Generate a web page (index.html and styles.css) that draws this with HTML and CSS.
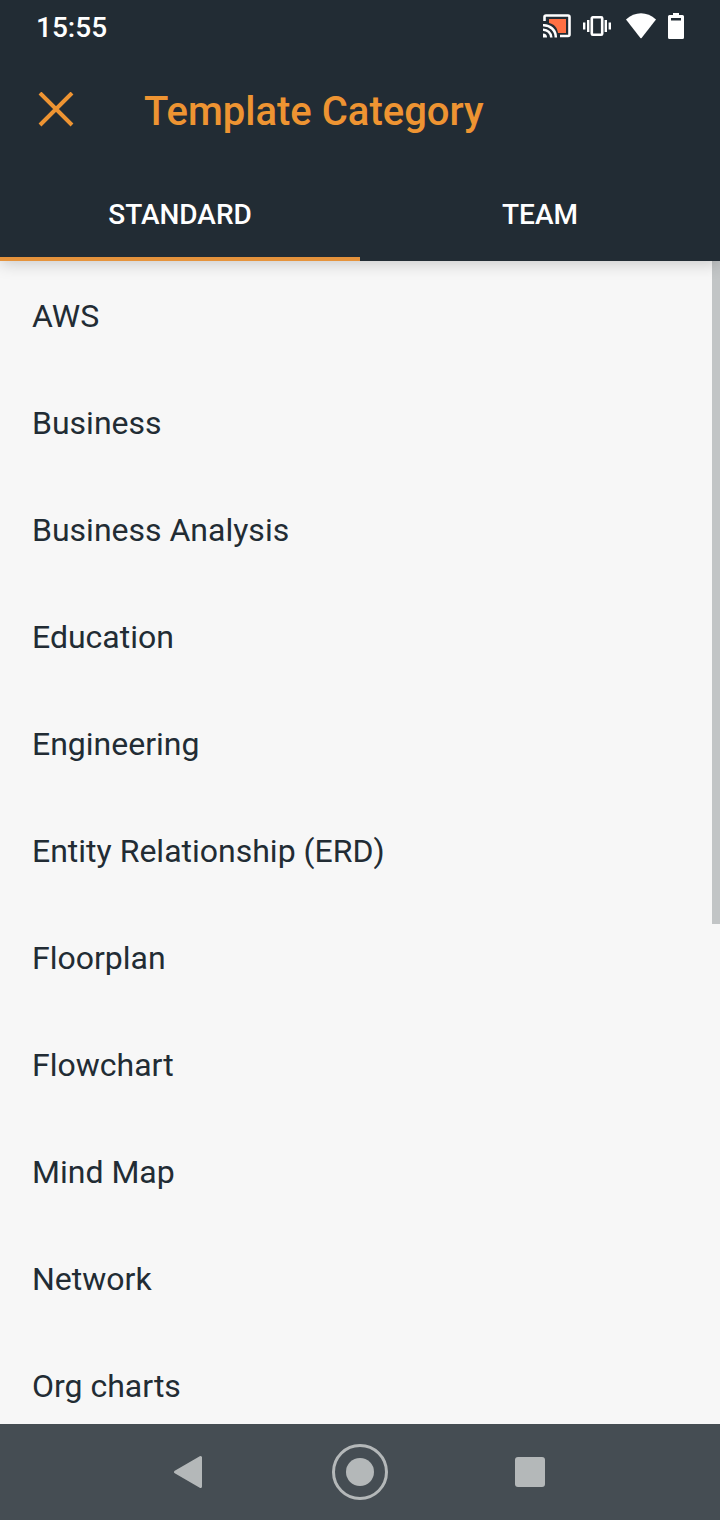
FILE: index.html
```
<!DOCTYPE html>
<html lang="en">

<head>
    <meta charset="UTF-8">
    <meta name="viewport" content="width=device-width, initial-scale=1.0">
    <title>Template Category</title>
    <link rel="stylesheet" href="styles.css">
</head>

<body>
    <header class="header">
        <div class="status-bar">
            <span class="clock">15:55</span>
            <div class="status-icons">
                <!-- cast -->
                <svg width="28" height="24" viewBox="0 0 28 24">
                    <path d="M6 5h17v14h-8C14 13 11 10 6 9z" fill="#ff7043" />
                    <path d="M1.5 7V3Q1.5 1.500 3 1.500H25Q26.500 1.500 26.500 3V20.500Q26.500 22 25 22H17" fill="none" stroke="#fff" stroke-width="2.600" />
                    <path d="M0 11.200A12 12 0 0 1 12.800 23.500M0 15.700A8 8 0 0 1 8.300 23.500" fill="none" stroke="#fff" stroke-width="2.500" />
                    <path d="M0 19.500A4 4 0 0 1 4 23.500H0z" fill="#fff" />
                </svg>
                <!-- vibrate -->
                <svg width="28" height="24" viewBox="0 0 28 24">
                    <rect x="8.800" y="3.300" width="10.400" height="17.400" rx="1" fill="none" stroke="#fff" stroke-width="2.600" />
                    <path d="M1.200 8.500v7M5.200 6v12M22.800 6v12M26.800 8.500v7" fill="none" stroke="#fff" stroke-width="2.400" />
                </svg>
                <!-- wifi -->
                <svg width="33" height="26" viewBox="-3 0 33 26">
                    <path d="M0 6.500C9-2 21-2 30 6.500L15.600 25q-.6.700-1.200 0z" fill="#fff" />
                </svg>
                <!-- battery -->
                <svg width="16" height="26" viewBox="0 0 16 26">
                    <path d="M5 0h6v2h3.500Q16 2 16 3.500v21q0 1.500-1.500 1.500h-13Q0 26 0 24.500v-21Q0 2 1.500 2H5z" fill="#fff" />
                    <path d="M3 5h10v2.500H3z" fill="#222c34" />
                </svg>
            </div>
        </div>

        <div class="app-bar">
            <button class="close-button" aria-label="Close">
                <svg width="36" height="36" viewBox="0 0 36 36">
                    <path d="M2 1L34 33M34 1L2 33" stroke="#ee9432" stroke-width="4" />
                </svg>
            </button>
            <h1>Template Category</h1>
        </div>

        <div class="tabs" role="tablist">
            <button class="tab active" role="tab" aria-selected="true">STANDARD</button>
            <button class="tab" role="tab" aria-selected="false">TEAM</button>
        </div>
    </header>

    <main class="content">
        <ul class="category-list">
            <li><a href="#aws">AWS</a></li>
            <li><a href="#business">Business</a></li>
            <li><a href="#business-analysis">Business Analysis</a></li>
            <li><a href="#education">Education</a></li>
            <li><a href="#engineering">Engineering</a></li>
            <li><a href="#erd">Entity Relationship (ERD)</a></li>
            <li><a href="#floorplan">Floorplan</a></li>
            <li><a href="#flowchart">Flowchart</a></li>
            <li><a href="#mind-map">Mind Map</a></li>
            <li><a href="#network">Network</a></li>
            <li><a href="#org-charts">Org charts</a></li>
        </ul>
        <div class="scroll-thumb"></div>
    </main>

    <nav class="nav-bar">
        <button class="nav-button" aria-label="Back">
            <svg width="56" height="56" viewBox="0 0 56 56">
                <path d="M15.500 28L40.500 13.500V42.500z" fill="#b4b8b9" stroke="#b4b8b9" stroke-width="3" stroke-linejoin="round" />
            </svg>
        </button>
        <button class="nav-button" aria-label="Home">
            <svg width="56" height="56" viewBox="0 0 56 56">
                <circle cx="28" cy="28" r="26.500" fill="none" stroke="#b4b8b9" stroke-width="3" />
                <circle cx="28" cy="28" r="14" fill="#b4b8b9" />
            </svg>
        </button>
        <button class="nav-button" aria-label="Recent apps">
            <svg width="56" height="56" viewBox="0 0 56 56">
                <rect x="11" y="13" width="30" height="30" rx="3" fill="#b4b8b9" />
            </svg>
        </button>
    </nav>
</body>

</html>
```
FILE: styles.css
```
* {
    box-sizing: border-box;
}

body {
    font-family: Roboto, sans-serif;
    background-color: #f7f7f7;
    color: #222c34;
    margin: 0;
    display: flex;
    flex-direction: column;
    height: 100vh;
}

button {
    font-family: inherit;
    background: none;
    border: none;
    padding: 0;
    cursor: pointer;
}

svg {
    display: block;
}

.header {
    position: relative;
    z-index: 1;
    background-color: #222c34;
    box-shadow: 0 2px 16px rgba(0, 0, 0, 0.2);
}

.status-bar {
    display: flex;
    justify-content: space-between;
    align-items: center;
    height: 54px;
    padding: 0 36px;
    color: #fff;
}

.clock {
    font-size: 28px;
    font-weight: 500;
}

.status-icons {
    display: flex;
    align-items: center;
    gap: 12px;
    padding-bottom: 2px;
}

.app-bar {
    display: flex;
    align-items: center;
    gap: 70px;
    height: 112px;
    padding: 0 38px;
}

.app-bar h1 {
    margin: 0;
    padding-top: 2px;
    font-size: 40px;
    font-weight: 500;
    color: #ee9432;
}

.tabs {
    display: flex;
}

.tab {
    flex: 1;
    height: 95px;
    padding-top: 6px;
    font-size: 28px;
    font-weight: 500;
    color: #fff;
    border-bottom: 4px solid transparent;
}

.tab.active {
    border-bottom-color: #e5933c;
}

.content {
    position: relative;
    flex: 1;
    min-height: 0;
    overflow: hidden;
}

.category-list {
    list-style: none;
    margin: 0;
    padding: 2px 0 0;
}

.category-list a {
    display: block;
    padding: 0 32px;
    font-size: 32px;
    line-height: 107px;
    color: inherit;
    text-decoration: none;
}

.scroll-thumb {
    position: absolute;
    top: 0;
    right: 0;
    width: 8px;
    height: 57%;
    background-color: #c2c5c6;
}

.nav-bar {
    display: flex;
    justify-content: center;
    align-items: center;
    gap: 116px;
    height: 96px;
    background-color: #454d53;
}
```
